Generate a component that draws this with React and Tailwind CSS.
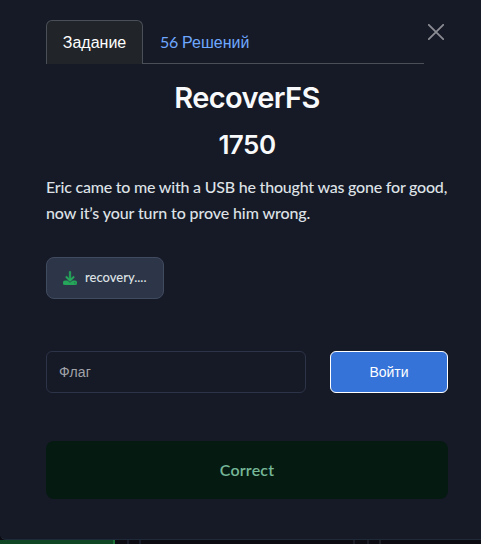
function Tabs() {
  return (
    <div className="mr-6 flex h-11 border-b border-[#495057]">
      <div className="h-11 w-[97px] rounded-t-md border border-b-0 border-[#495057] bg-[#212529] pt-[10px] text-center font-['Liberation_Sans',sans-serif] text-[16px] leading-6 text-white">
        Задание
      </div>
      <div className="pl-[17px] pt-[10px] font-['Liberation_Sans',sans-serif] text-[16px] leading-6 text-[#6ea8fe]">
        <span className="font-['Lato',sans-serif] tracking-[-0.2px]">56 </span>Решений
      </div>
    </div>
  );
}

function CloseIcon() {
  return (
    <svg className="absolute right-[37px] top-6 size-4" viewBox="0 0 16 16" fill="none" stroke="#8b8c93" strokeWidth="1.8" strokeLinecap="round">
      <path d="M.8.8l14.4 14.4M15.2.8L.8 15.2" />
    </svg>
  );
}

function DownloadIcon() {
  return (
    <svg className="size-[14px] shrink-0" viewBox="0 0 512 512">
      <path
        fill="#26a65b"
        stroke="#26a65b"
        strokeWidth="14"
        d="M288 32c0-17.7-14.3-32-32-32s-32 14.3-32 32v242.700l-73.400-73.400c-12.500-12.500-32.800-12.500-45.300 0s-12.500 32.800 0 45.300l128 128c12.500 12.500 32.800 12.500 45.300 0l128-128c12.500-12.500 12.500-32.800 0-45.300s-32.800-12.500-45.300 0L288 274.700V32zM64 352c-35.300 0-64 28.700-64 64v32c0 35.300 28.700 64 64 64h384c35.300 0 64-28.700 64-64v-32c0-35.300-28.700-64-64-64H346.500l-45.300 45.300c-25 25-65.500 25-90.500 0L165.500 352H64zm368 56a24 24 0 1 1 0 48 24 24 0 1 1 0-48z"
      />
    </svg>
  );
}

export default function App() {
  return (
    <div className="flex h-[544px] w-[481px] flex-col overflow-hidden bg-[#0b0b11]">
      <div className="relative h-[540px] shrink-0 rounded-bl-md border-b border-[#1e2a38] bg-[#161926] pl-[46px] pr-[33px] pt-5 font-['Lato',sans-serif]">
        <CloseIcon />
        <Tabs />
        <h2 className="mt-[16px] text-center font-['Inter',sans-serif] text-[29px] font-semibold leading-9 tracking-[-0.65px] text-[#f8f9fa]">
          RecoverFS
        </h2>
        <h3 className="mt-[11px] text-center font-['Inter',sans-serif] text-[26px] font-semibold leading-9 tracking-[-0.5px] text-[#f8f9fa]">
          1750
        </h3>
        <p className="mt-[11px] whitespace-nowrap text-[16px] font-medium leading-[26px] text-[#dee2e6]">
          <span className="tracking-[-0.21px]">Eric came to me with a USB he thought was gone for good,</span>
          <br />
          <span className="tracking-[-0.1px]">now it’s your turn to prove him wrong.</span>
        </p>
        <button className="mt-[31px] flex h-[42px] w-[118px] items-center gap-2 rounded-lg border border-[#414b60] bg-[#2d3648] pl-4 text-[13px] font-medium text-[#dee2e6]">
          <DownloadIcon />
          <span>recovery....</span>
        </button>
        <div className="mt-[52px] flex gap-6 font-['Liberation_Sans',sans-serif] text-[14px]">
          <input
            className="h-[42px] w-[260px] rounded-md border border-[#2d3448] bg-transparent px-3 tracking-[0.2px] placeholder:text-[#a1a3a9]"
            placeholder="Флаг"
          />
          <button className="h-[42px] w-[118px] rounded-md border border-white bg-[#3573d9] text-white">Войти</button>
        </div>
        <div className="mt-12 flex h-[58px] items-center justify-center rounded-lg bg-[#051b11] text-[16px] font-semibold tracking-[0.2px] text-[#75b798]">
          Correct
        </div>
      </div>
      <div className="flex h-1 shrink-0">
        <div className="w-[115px] border-r-2 border-[#1b7038] bg-[#0f4623]" />
        <div className="ml-3 w-[14px] border-x-2 border-[#191d2b]" />
        <div className="ml-[212px] w-[16px] border-x-2 border-[#1a1d26]" />
        <div className="ml-[10px] w-[2px] bg-[#1e2027]" />
      </div>
    </div>
  );
}
